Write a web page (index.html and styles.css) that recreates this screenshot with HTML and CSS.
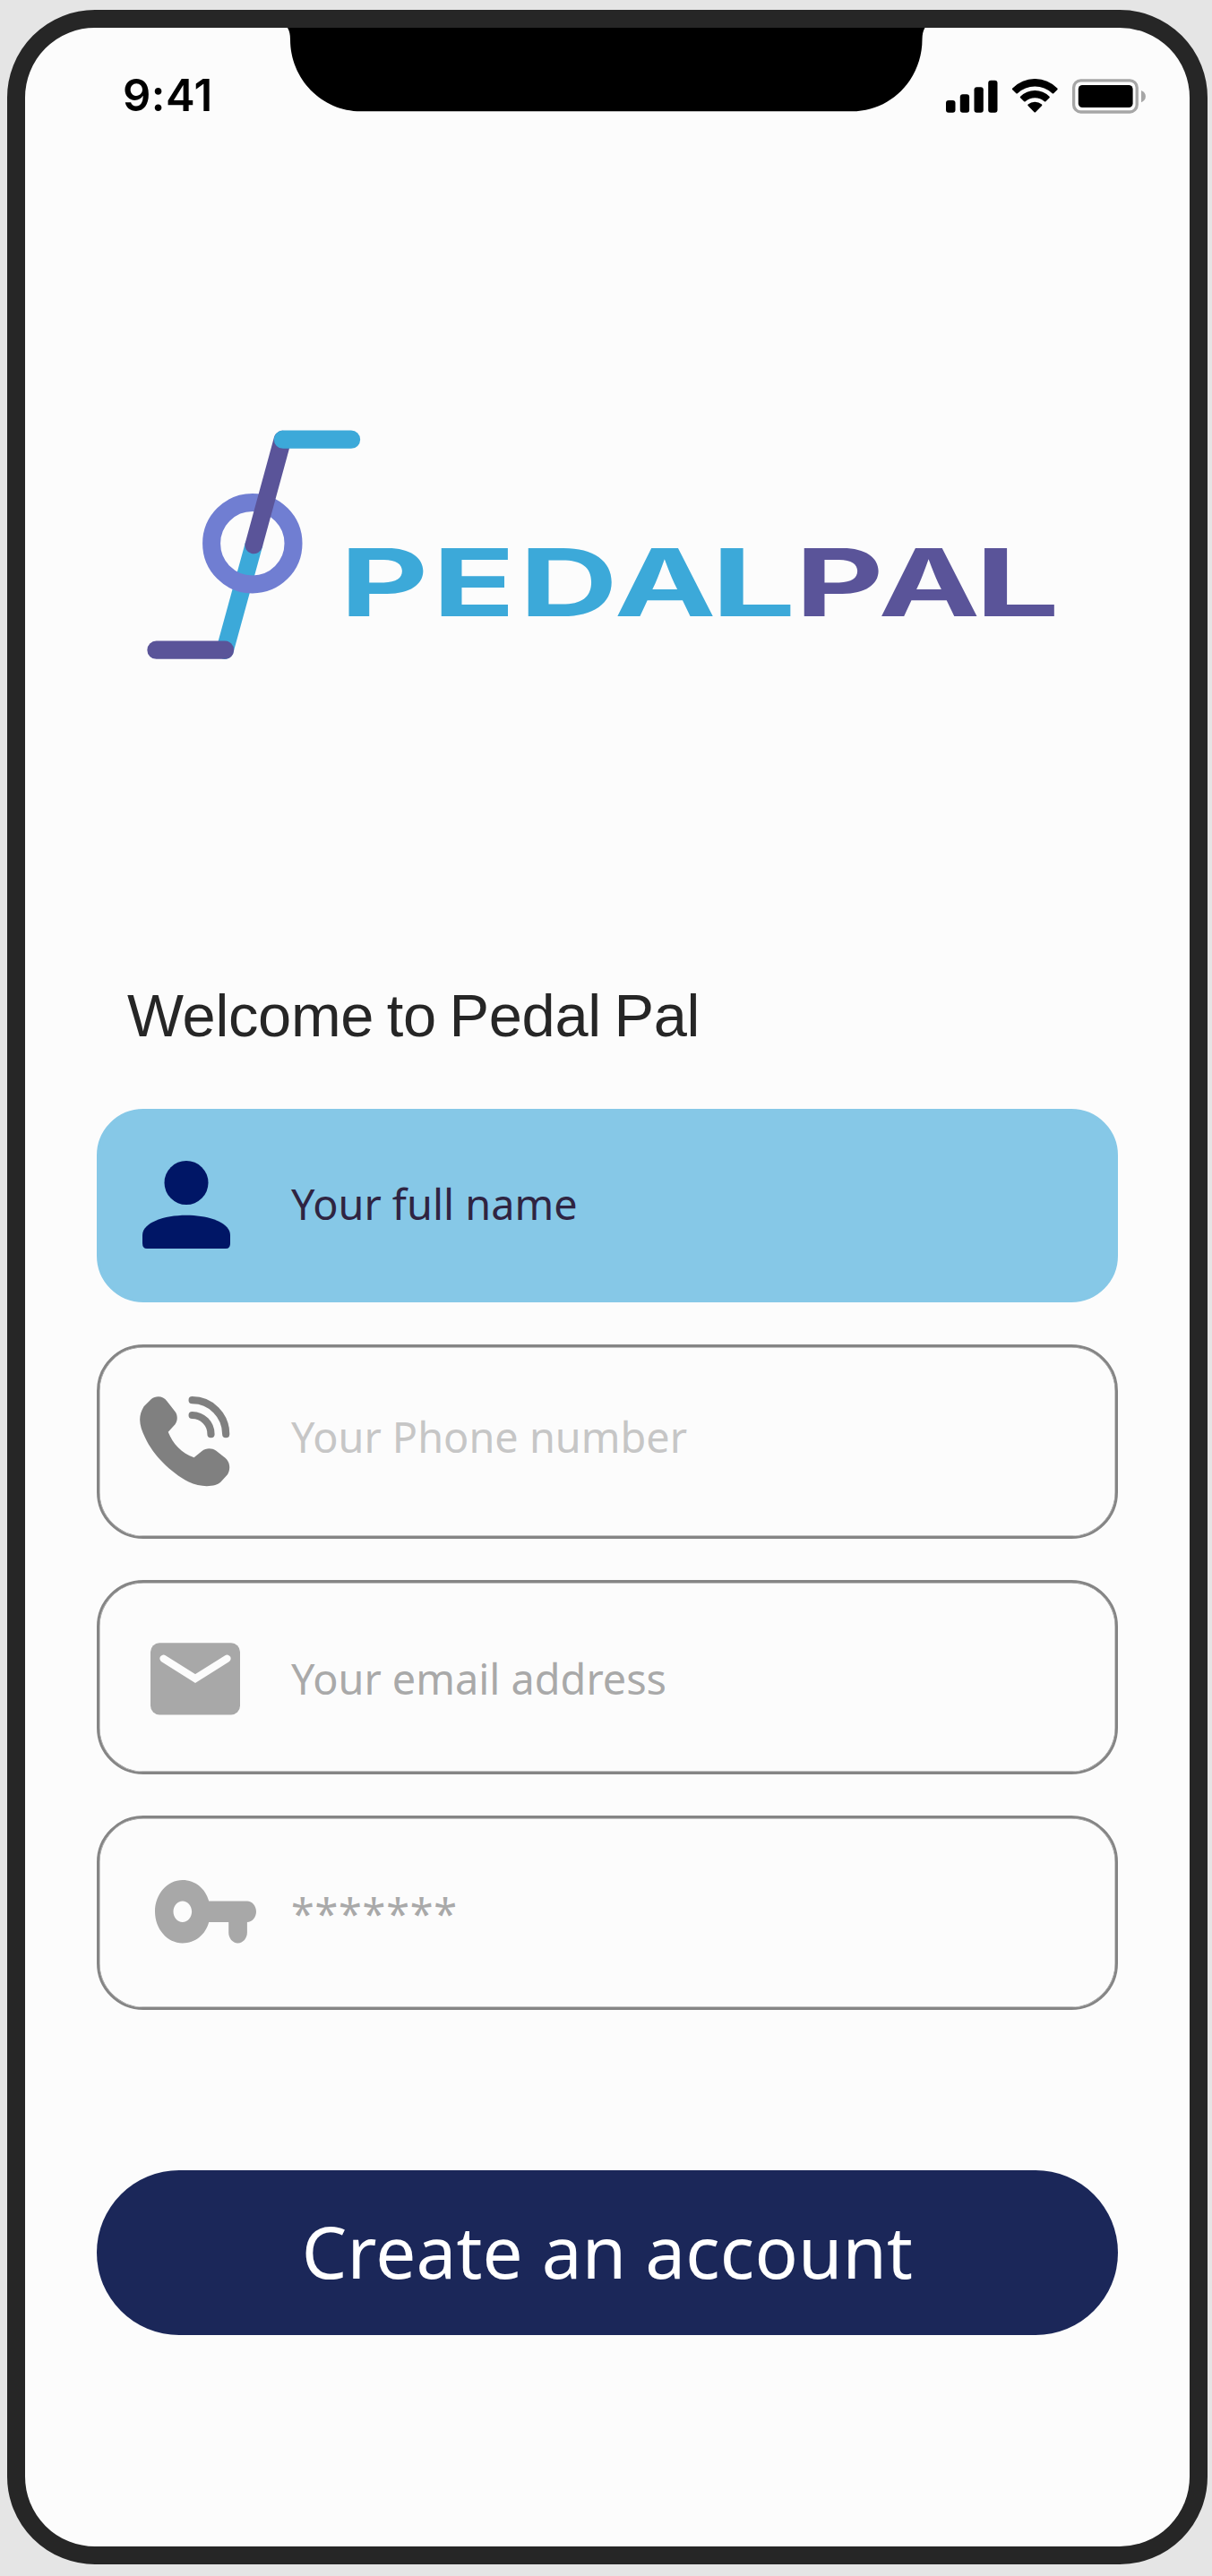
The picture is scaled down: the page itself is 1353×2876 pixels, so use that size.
FILE: index.html
```html
<!DOCTYPE html>
<html lang="en">
<head>
<meta charset="utf-8">
<title>Pedal Pal</title>
<link rel="stylesheet" href="styles.css">
</head>
<body>
<main class="phone">
  <div class="notch">
    <svg width="714" height="94" viewBox="0 0 714 94"><path d="M0 0Q3 5 3 13C3 57 38 93.300 82 93.300H630C674 93.300 708.500 57 708.500 13Q708.500 5 711.500 0Z" fill="#000"/></svg>
  </div>
  <header class="status">
    <span class="time">9:41</span>
    <svg class="status-icons" width="224" height="40" viewBox="0 0 224 40">
      <rect x="1" y="24" width="10.500" height="13.800" rx="3"/>
      <rect x="16.800" y="17.200" width="10.300" height="20.600" rx="3"/>
      <rect x="32.500" y="9.200" width="10.300" height="28.600" rx="3"/>
      <rect x="48.200" y="1.700" width="10.300" height="36.100" rx="3"/>
      <g transform="translate(74.700 0)">
        <path d="M.6 10.500A35 35 0 0 1 50.600 10.500Q51.400 11.300 50.600 12.200L46.500 16.300Q45.900 16.900 45 16.200A28.500 28.500 0 0 0 6.200 16.200Q5.300 16.900 4.700 16.300L.6 12.200Q-.2 11.300 .6 10.500Z"/>
        <path d="M9.400 19.700A23 23 0 0 1 41.800 19.700Q42.600 20.500 41.800 21.300L37.700 25.200Q37 25.800 36.200 25.200A16 16 0 0 0 15 25.200Q14.200 25.800 13.500 25.200L9.400 21.300Q8.600 20.500 9.400 19.700Z"/>
        <path d="M17.900 28.500A12 12 0 0 1 33.300 28.500Q34 29.200 33.400 30L26.300 37.200Q25.600 37.900 24.900 37.200L17.800 30Q17.200 29.200 17.900 28.500Z"/>
      </g>
      <rect x="143.600" y="1.800" width="70.600" height="35.200" rx="8" fill="none" stroke="#a6a6a6" stroke-width="3.300"/>
      <rect x="148.800" y="7" width="60.800" height="25" rx="4.500"/>
      <path d="M219 13Q223.900 15 223.900 19.600Q223.900 24.300 219 26.300Z" fill="#a6a6a6"/>
    </svg>
  </header>
  <svg class="logo" width="1020" height="260" viewBox="160 478 1020 260" role="img" aria-label="PedalPal">
    <g fill="none" stroke-linecap="round">
      <path d="M283.300 608.500L251 726" stroke="#3ca9d9" stroke-width="19.700"/>
      <circle cx="281.800" cy="606.700" r="45.700" stroke="#707ed2" stroke-width="20"/>
      <path d="M315.500 490.700L283.300 608.500" stroke="#5a5499" stroke-width="19.700"/>
      <path d="M316 490.700H392" stroke="#3ca9d9" stroke-width="20.300"/>
      <path d="M174.500 725.700H251" stroke="#5a5499" stroke-width="20.300"/>
    </g>
    <g class="wordmark">
      <text transform="translate(0 687.700) scale(1.450 1)" x="261.700 332.900 399.900 473" fill="#3ca9d9">PEDA</text>
      <text transform="translate(793.500 687.700) scale(1.600 1)" fill="#3ca9d9">L</text>
      <text transform="translate(0 687.700) scale(1.450 1)" x="612.200 676.200" fill="#5a5499">PA</text>
      <text transform="translate(1088 687.700) scale(1.600 1)" fill="#5a5499">L</text>
    </g>
  </svg>
  <h1 class="welcome">Welcome to Pedal Pal</h1>
  <form class="form">
    <div class="field field-name">
      <svg width="98" height="98" viewBox="0 0 98 98" fill="#001666"><circle cx="49" cy="24.500" r="24.500"/><path d="M0 83C0 69 24 60.700 49 60.700S98 69 98 83V92Q98 98 93 98H5Q0 98 0 92Z"/></svg>
      <span>Your full name</span>
    </div>
    <div class="field field-phone">
      <svg width="101" height="101" viewBox="0 0 101 101"><path fill="#808080" d="M12.900 2.900C18 -1 26 -1 30.300 5.300L39.500 17C42.500 21 42.500 27 39.500 31.300L31.700 39.700C37 53 47 63.500 60.600 68.300L69.500 61C74 57.300 80.500 57.300 85 60.600L95.500 68.700C101 73.500 101.500 81.500 98 87.300L90.500 95.500C85 101 69 102.500 54.200 95.300C35 85 15 66 6 46C-1 32 -2 22 4.600 11.300Z"/><g fill="none" stroke="#808080" stroke-width="8.200" stroke-linecap="round"><path d="M58.600 4.200A37.600 38 0 0 1 96.200 42.200"/><path d="M58.600 21A21 21.200 0 0 1 79.500 42.200"/></g></svg>
      <span>Your Phone number</span>
    </div>
    <div class="field field-email">
      <svg width="100" height="81" viewBox="0 0 100 81"><rect y=".3" width="100" height="80.200" rx="10" fill="#a8a8a8"/><path d="M14.500 17.700L50 40L85.500 17.700" fill="none" stroke="#fcfcfc" stroke-width="8.300" stroke-linecap="round"/></svg>
      <span>Your email address</span>
    </div>
    <div class="field field-password">
      <svg width="113" height="71" viewBox="0 0 113 71" fill="#a8a8a8"><path fill-rule="evenodd" d="M30.800 0C45 0 56.500 9.500 60.200 23.500H102.900C108.500 23.500 113 28.800 113 35.200S108.500 47 102.900 47V58.500C102.900 65 98.300 70.400 92.500 70.400S82.200 65 82.200 58.500V47H60.200C56.500 61 45 70.400 30.800 70.400C13.800 70.400 0 54.600 0 35.200S13.800 0 30.800 0ZM30.800 23.400C25.100 23.400 20.500 28.700 20.500 35.200S25.100 47 30.800 47S41.100 41.700 41.100 35.200S36.500 23.400 30.800 23.400Z"/></svg>
      <span>*******</span>
    </div>
    <button class="submit" type="button">Create an account</button>
  </form>
</main>
</body>
</html>
```
FILE: styles.css
```css
* { box-sizing: border-box; }
body { margin: 0; height: 2876px; overflow: hidden; background: #e5e5e5; }
.phone {
  position: relative;
  width: 1339.7px;
  height: 2852.4px;
  margin: 11px 0 0 8px;
  border: 20px solid #262626;
  border-radius: 98px;
  background: #fcfcfc;
  display: flex;
  flex-direction: column;
}
.notch { position: absolute; left: 292.500px; top: 0; }
.notch svg, .field svg, .logo { display: block; flex: none; }
.status {
  display: flex;
  justify-content: space-between;
  align-items: flex-start;
  padding: 57px 48.700px 0 109px;
  height: 447px;
}
.time { font: 600 49px/58px Inter, sans-serif; margin-top: -10px; letter-spacing: .500px; }
.logo { margin-left: 132px; overflow: visible; }
.wordmark { font: 700 105px Inter, sans-serif; }
.welcome {
  margin: 358px 0 0 114px;
  font: 400 66.800px/76px "Liberation Sans", Arial, sans-serif;
  letter-spacing: -.300px;
  word-spacing: -3.600px;
  color: #262626;
  white-space: nowrap;
}
.form { margin: 65.500px 0 0 80px; width: 1140px; display: flex; flex-direction: column; gap: 46.300px; }
.field {
  height: 216.900px;
  border: 3px solid #858585;
  box-shadow: inset 0 0 0 .400px #858585;
  border-radius: 52px;
  display: grid;
  grid-template-columns: 214px 1fr;
  align-items: start;
  font: 400 46.800px/64px "Noto Sans", sans-serif;
  color: #a9a9a9;
}
.field-name { background: #86c8e7; border-color: #86c8e7; box-shadow: none; color: #2f2441; }
.field-name svg { margin: 55px 0 0 47.800px; }
.field-name span { margin-top: 71px; }
.field-phone { color: #c6c6c6; }
.field-phone svg { margin: 55.500px 0 0 45px; }
.field-phone span { margin-top: 68px; }
.field-email svg { margin: 67px 0 0 57px; }
.field-email span { margin-top: 75px; }
.field-password svg { margin: 68.500px 0 0 62px; }
.field-password span { margin-top: 74px; letter-spacing: .750px; }
.submit {
  margin-top: 133px;
  height: 183.700px;
  border: 0;
  padding: 0 0 6px;
  border-radius: 92px;
  background: #1b2759;
  color: #fff;
  font: 400 80px/109px "Noto Sans", sans-serif;
  letter-spacing: .150px;
}
```
